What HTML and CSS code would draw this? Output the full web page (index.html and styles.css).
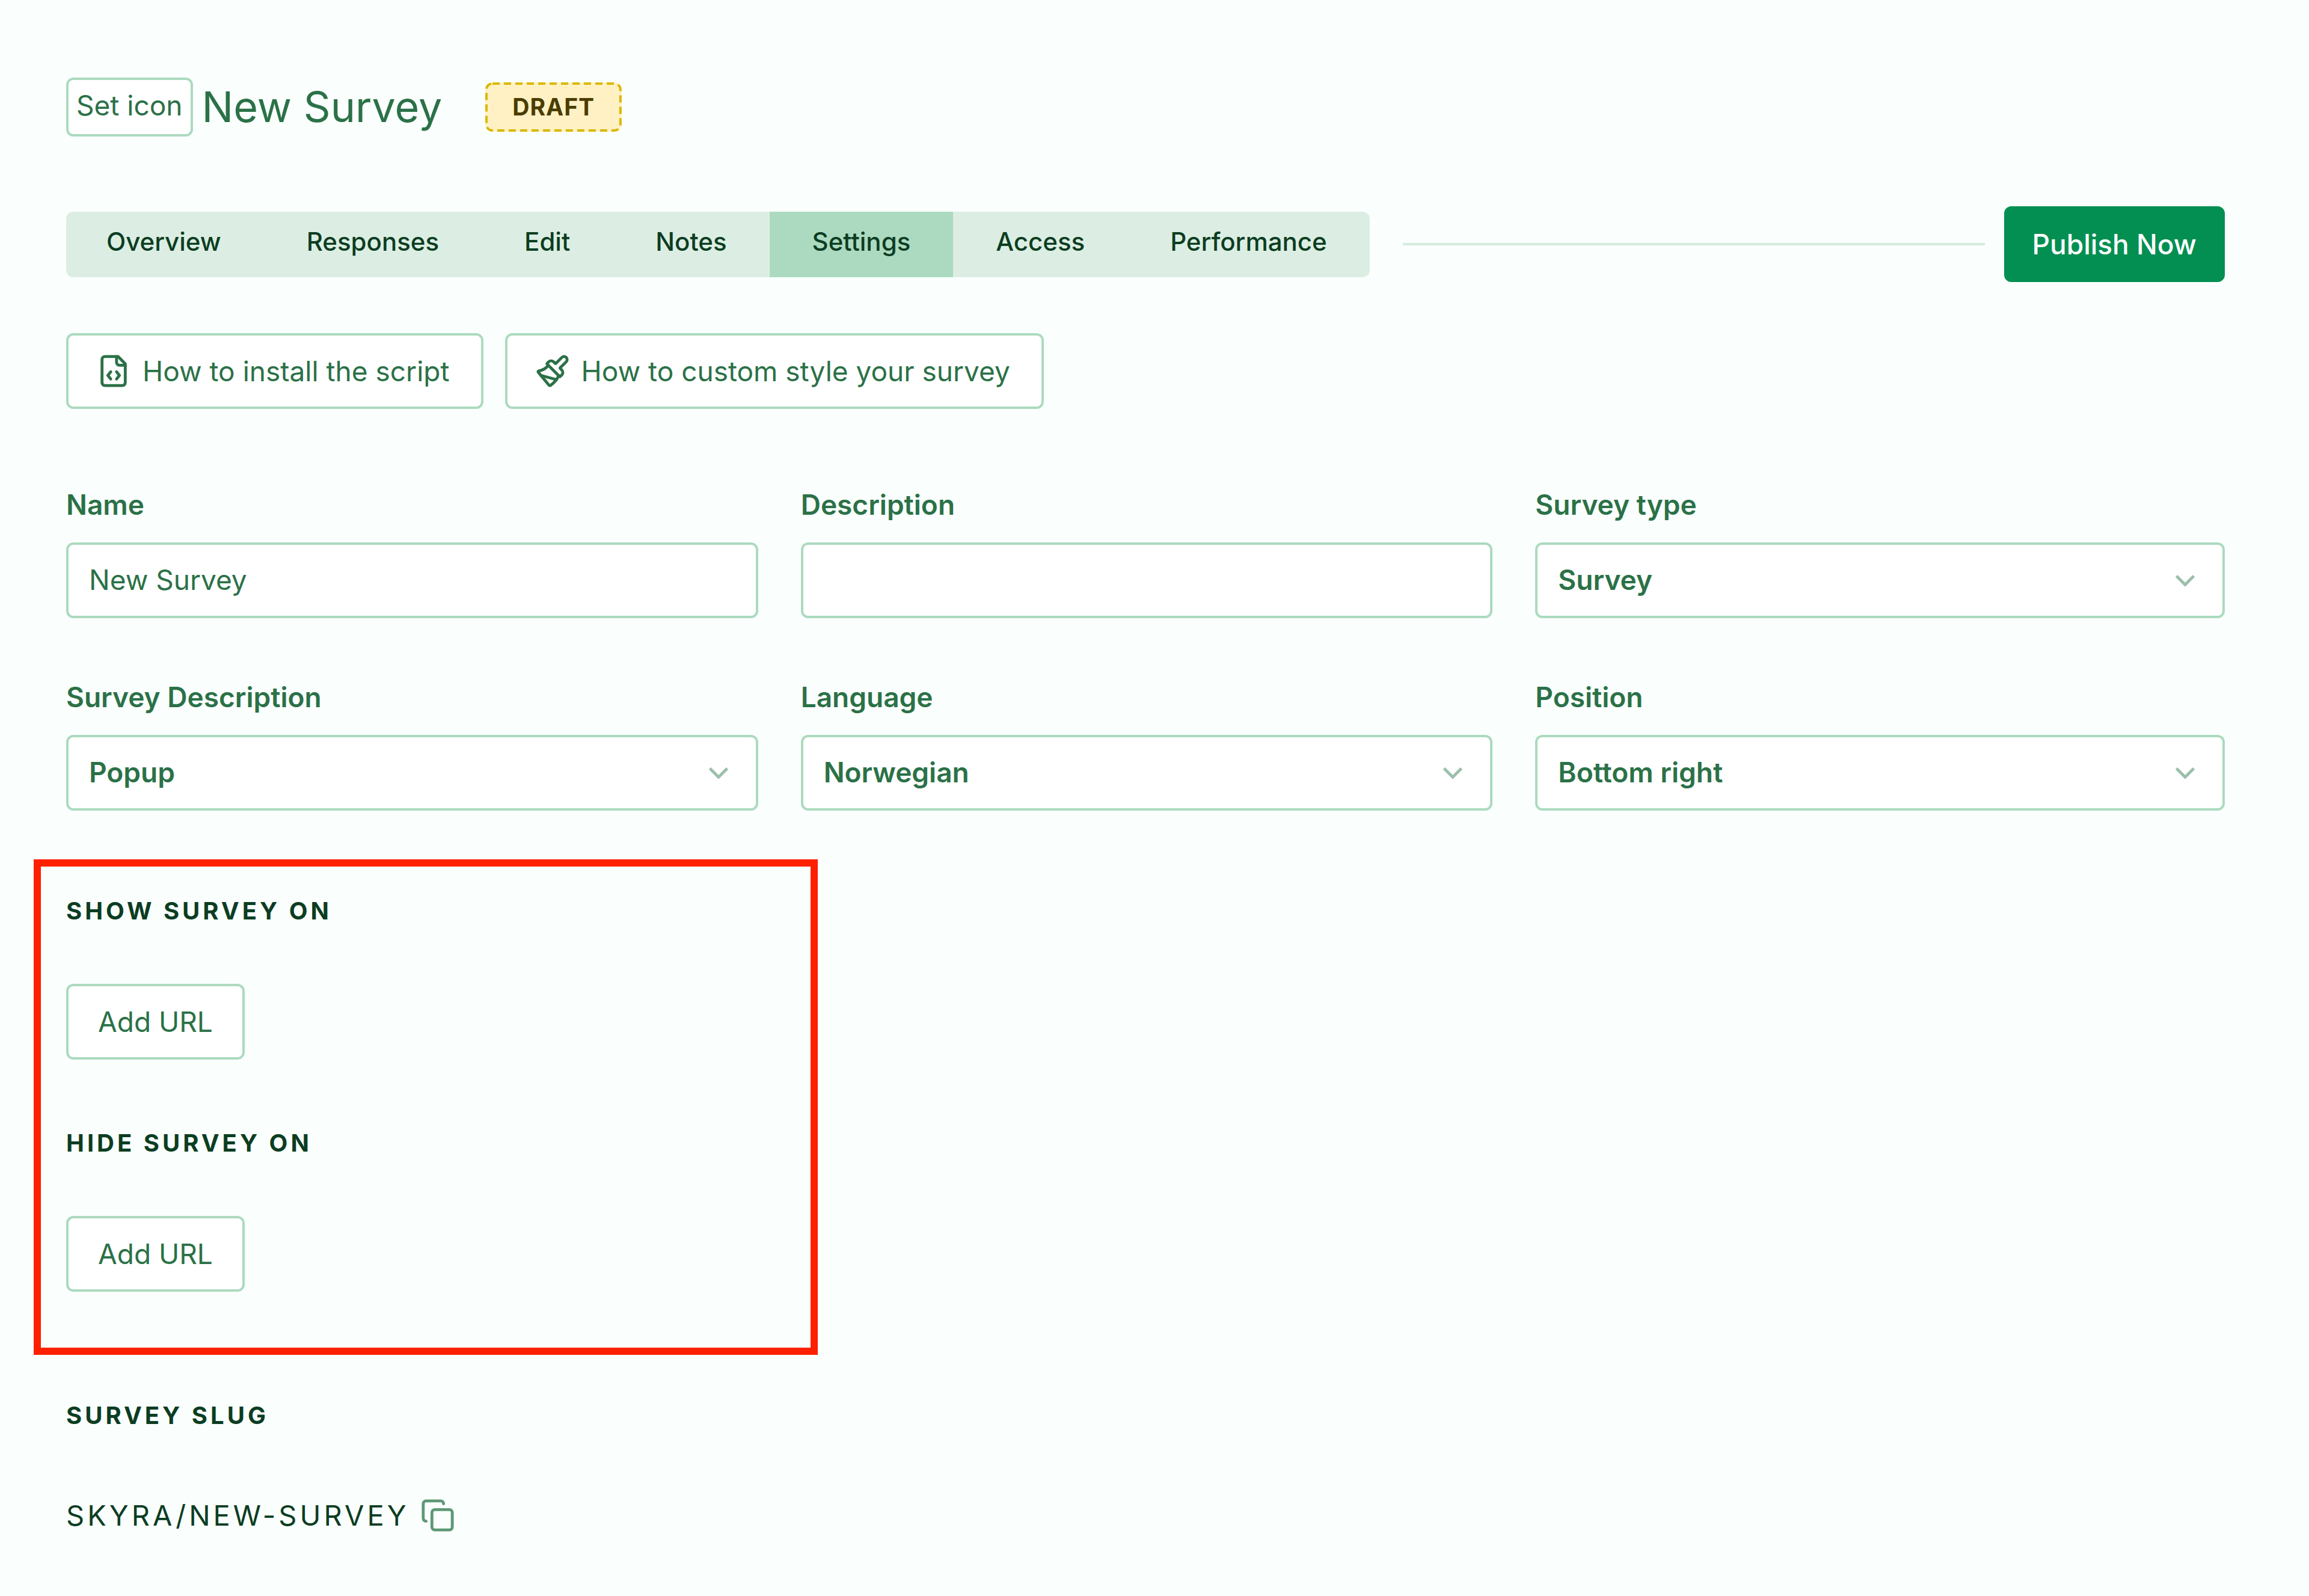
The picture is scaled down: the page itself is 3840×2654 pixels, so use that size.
FILE: index.html
```html
<!DOCTYPE html>
<html lang="en">
<head>
  <meta charset="utf-8">
  <meta name="viewport" content="width=device-width, initial-scale=1">
  <title>New Survey – Settings</title>
  <link rel="stylesheet" href="styles.css">
</head>
<body>
  <main class="page">
    <header class="page-header">
      <button type="button" class="btn btn-icon-picker">Set icon</button>
      <h1 class="page-title">New Survey</h1>
      <span class="badge">
        <svg class="badge-outline" aria-hidden="true"><rect class="badge-dashes" rx="10"/></svg>
        DRAFT
      </span>
    </header>

    <div class="toolbar">
      <nav class="tabs" aria-label="Survey sections">
        <a class="tab" href="#overview">Overview</a>
        <a class="tab" href="#responses">Responses</a>
        <a class="tab" href="#edit">Edit</a>
        <a class="tab" href="#notes">Notes</a>
        <a class="tab tab-active" href="#settings" aria-current="page">Settings</a>
        <a class="tab" href="#access">Access</a>
        <a class="tab" href="#performance">Performance</a>
      </nav>
      <hr class="toolbar-line">
      <button type="button" class="btn btn-primary">Publish Now</button>
    </div>

    <div class="help-links">
      <button type="button" class="btn btn-with-icon">
        <svg class="icon" viewBox="0 0 24 24" aria-hidden="true">
          <path d="M15 2H6a2 2 0 0 0-2 2v16a2 2 0 0 0 2 2h12a2 2 0 0 0 2-2V7z"/>
          <path d="M14 2v4a2 2 0 0 0 2 2h4"/>
          <path d="M10 12.5 8 15l2 2.5"/>
          <path d="m14 12.5 2 2.5-2 2.5"/>
        </svg>
        How to install the script
      </button>
      <button type="button" class="btn btn-with-icon">
        <svg class="icon" viewBox="0 0 24 24" aria-hidden="true">
          <path d="m14.622 17.897-10.68-2.913"/>
          <path d="M18.376 2.622a1 1 0 1 1 3.002 3.002L17.36 9.643a.5.5 0 0 0 0 .707l.944.944a2.41 2.41 0 0 1 0 3.408l-.944.944a.5.5 0 0 1-.707 0L8.354 7.348a.5.5 0 0 1 0-.707l.944-.944a2.41 2.41 0 0 1 3.408 0l.944.944a.5.5 0 0 0 .707 0z"/>
          <path d="M9 8c-1.804 2.71-3.97 3.46-6.583 3.948a.507.507 0 0 0-.302.819l7.32 8.883a1 1 0 0 0 1.185.204C12.735 20.405 16 16.792 16 15"/>
        </svg>
        How to custom style your survey
      </button>
    </div>

    <form class="fields">
      <div class="field">
        <label class="label" for="name">Name</label>
        <input class="control" id="name" type="text" value="New Survey">
      </div>
      <div class="field">
        <label class="label" for="description">Description</label>
        <input class="control" id="description" type="text">
      </div>
      <div class="field">
        <label class="label" for="type">Survey type</label>
        <div class="select">
          <select class="control" id="type"><option>Survey</option></select>
          <svg class="chevron" viewBox="0 0 24 24" aria-hidden="true"><path d="m6 9 6 6 6-6"/></svg>
        </div>
      </div>
      <div class="field">
        <label class="label" for="display">Survey Description</label>
        <div class="select">
          <select class="control" id="display"><option>Popup</option></select>
          <svg class="chevron" viewBox="0 0 24 24" aria-hidden="true"><path d="m6 9 6 6 6-6"/></svg>
        </div>
      </div>
      <div class="field">
        <label class="label" for="language">Language</label>
        <div class="select">
          <select class="control" id="language"><option>Norwegian</option></select>
          <svg class="chevron" viewBox="0 0 24 24" aria-hidden="true"><path d="m6 9 6 6 6-6"/></svg>
        </div>
      </div>
      <div class="field">
        <label class="label" for="position">Position</label>
        <div class="select">
          <select class="control" id="position"><option>Bottom right</option></select>
          <svg class="chevron" viewBox="0 0 24 24" aria-hidden="true"><path d="m6 9 6 6 6-6"/></svg>
        </div>
      </div>
    </form>

    <div class="url-rules">
      <section class="rule">
        <h2 class="section-title">SHOW SURVEY ON</h2>
        <button type="button" class="btn">Add URL</button>
      </section>
      <section class="rule">
        <h2 class="section-title">HIDE SURVEY ON</h2>
        <button type="button" class="btn">Add URL</button>
      </section>
    </div>

    <section class="slug">
      <h2 class="section-title">SURVEY SLUG</h2>
      <div class="slug-row">
        <span class="slug-text">SKYRA/NEW-SURVEY</span>
        <button type="button" class="copy" aria-label="Copy slug">
          <svg class="icon" viewBox="0 0 24 24" aria-hidden="true">
            <rect x="8" y="8" width="14" height="14" rx="2"/>
            <path d="M4 16c-1.1 0-2-.9-2-2V4c0-1.1.9-2 2-2h10c1.1 0 2 .9 2 2"/>
          </svg>
        </button>
      </div>
    </section>
  </main>
</body>
</html>
```
FILE: styles.css
```css
:root {
  --bg: #fafffe;
  --text: #2b7147;
  --text-dark: #0c3d22;
  --border: #acdabf;
  --tabs: #dceee3;
  --tab-active: #acdac0;
  --line: #d3ecde;
  --primary: #038f52;
  --muted: #9cbfab;
  --icon-soft: #5f9876;
  --radius: 12px;
}

* {
  box-sizing: border-box;
}

body {
  margin: 0;
  background: var(--bg);
  color: var(--text);
  font-family: Inter, "Liberation Sans", sans-serif;
  font-size: 46px;
  line-height: 56px;
}

h1,
h2 {
  margin: 0;
}

button,
input,
select {
  margin: 0;
  font: inherit;
  color: inherit;
}

.page {
  padding: 129px 140px 106px 110px;
}

/* Buttons */
.btn {
  display: inline-flex;
  align-items: center;
  justify-content: center;
  gap: 19px;
  height: 126px;
  padding: 0 49px;
  border: 4px solid var(--border);
  border-radius: var(--radius);
  background: #fff;
  white-space: nowrap;
}

.btn-with-icon {
  padding: 0 52px 0 46px;
}

.btn-primary {
  padding: 0 43px;
  border-color: var(--primary);
  background: var(--primary);
  color: #fff;
  font-weight: 500;
}

.btn-icon-picker {
  height: 98px;
  padding: 0 13px 6px;
}

.icon {
  flex: none;
  width: 58px;
  height: 58px;
  fill: none;
  stroke: currentColor;
  stroke-width: 2;
  stroke-linecap: round;
  stroke-linejoin: round;
}

/* Header */
.page-header {
  display: flex;
  align-items: center;
}

.page-title {
  margin-left: 15px;
  font-size: 70px;
  line-height: 84px;
  font-weight: 400;
}

.badge {
  position: relative;
  margin-left: 72px;
  padding: 17px 45px;
  border-radius: var(--radius);
  background: #fff1c4;
  color: #4a3d00;
  font-size: 39px;
  line-height: 48px;
  font-weight: 700;
  letter-spacing: 1px;
}

.badge-outline {
  position: absolute;
  inset: 0;
  width: 100%;
  height: 100%;
}

.badge-dashes {
  x: 2px;
  y: 2px;
  width: calc(100% - 4px);
  height: calc(100% - 4px);
  fill: none;
  stroke: #dbb800;
  stroke-width: 4;
  stroke-dasharray: 12 7;
}

/* Tab row */
.toolbar {
  display: flex;
  align-items: center;
  margin-top: 116px;
}

.tabs {
  display: flex;
  overflow: hidden;
  border-radius: var(--radius);
  background: var(--tabs);
}

.tab {
  padding: 22px 71px 31px;
  color: var(--text-dark);
  font-size: 42px;
  font-weight: 500;
  text-decoration: none;
}

.tab:first-child {
  padding-left: 67px;
}

.tab-active {
  background: var(--tab-active);
}

.toolbar-line {
  flex: 1;
  height: 4px;
  margin: 0 32px 0 55px;
  border: 0;
  background: var(--line);
}

.help-links {
  display: flex;
  gap: 36px;
  margin-top: 85px;
}

/* Form */
.fields {
  display: grid;
  grid-template-columns: 287fr 287fr 286fr;
  gap: 103px 71px;
  margin-top: 131px;
}

.field {
  display: flex;
  flex-direction: column;
  gap: 35px;
}

.label {
  font-weight: 600;
}

.control {
  width: 100%;
  height: 126px;
  padding: 0 34px 2px;
  border: 4px solid var(--border);
  border-radius: var(--radius);
  background: #fff;
}

.select {
  display: grid;
  align-items: center;
}

.select .control {
  grid-area: 1 / 1;
  appearance: none;
  font-weight: 600;
}

.chevron {
  grid-area: 1 / 1;
  justify-self: end;
  width: 58px;
  height: 58px;
  margin-right: 37px;
  fill: none;
  stroke: var(--muted);
  stroke-width: 2;
  pointer-events: none;
}

/* URL rules */
.url-rules {
  display: flex;
  flex-direction: column;
  gap: 115px;
  width: 1304px;
  margin: 81px 0 0 -54px;
  padding: 50px 42px 93px;
  border: 12px solid #ff2000;
}

.section-title {
  color: var(--text-dark);
  font-size: 40px;
  line-height: 48px;
  font-weight: 700;
  letter-spacing: 5px;
}

.rule {
  display: flex;
  flex-direction: column;
  align-items: flex-start;
  gap: 97px;
}

/* Slug */
.slug {
  margin-top: 77px;
}

.slug-row {
  display: flex;
  align-items: center;
  gap: 18px;
  margin-top: 113px;
}

.slug-text {
  color: var(--text-dark);
  font-size: 47px;
  letter-spacing: 5px;
}

.copy {
  display: flex;
  padding: 0;
  border: 0;
  background: none;
  color: var(--icon-soft);
}
```
